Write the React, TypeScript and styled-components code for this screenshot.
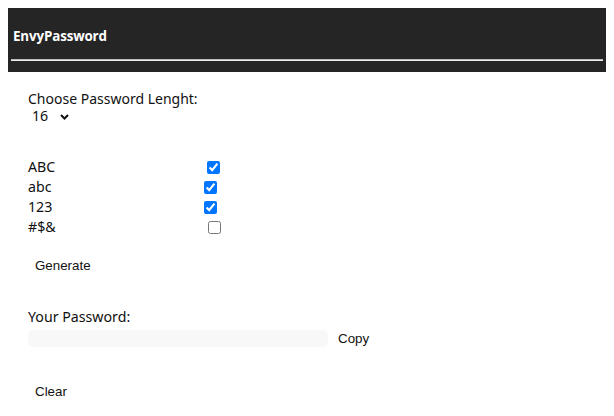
import React, { useState } from "react";
import styled, { createGlobalStyle } from "styled-components";

const Global = createGlobalStyle`
  body {
    margin: 8px;
    font-family: "Noto Sans", "Open Sans", sans-serif;
    font-size: 14px;
    color: #111;
    background: #fff;
  }
`;

const Header = styled.header`
  box-sizing: border-box;
  height: 64px;
  background: #252525;
  padding: 18px 3px 0 3px;
  display: flex;
  flex-direction: column;
`;

const Title = styled.h1`
  margin: 0 0 0 2px;
  font-family: "Open Sans", "Noto Sans", sans-serif;
  font-size: 13.4px;
  font-weight: 700;
  line-height: 20px;
  color: #fff;
  letter-spacing: -0.15px;
`;

const Rule = styled.hr`
  margin: 13px 0 0 0;
  height: 0;
  border: none;
  border-top: 1px solid #bcbcbc;
  border-bottom: 1px solid #ececec;
`;

const Main = styled.main`
  padding: 18px 0 0 20px;
  display: flex;
  flex-direction: column;
  align-items: flex-start;
`;

const Label = styled.label`
  display: block;
  line-height: 18px;
  font-size: 14px;
`;

const SelectWrap = styled.div`
  position: relative;
  height: 16px;
  display: flex;
  align-items: center;
`;

const Select = styled.select`
  appearance: none;
  -webkit-appearance: none;
  border: none;
  background: transparent;
  font-family: inherit;
  font-size: 14.2px;
  color: #111;
  line-height: 16px;
  height: 16px;
  padding: 0 0 0 4px;
  width: 44px;
  outline: none;
`;

const Chevron = styled.svg`
  position: absolute;
  left: 32px;
  top: 6px;
  pointer-events: none;
`;

const Options = styled.div`
  margin-top: 33px;
  display: flex;
  flex-direction: column;
`;

const OptionRow = styled.div`
  display: flex;
  align-items: center;
  height: 20px;
`;

const OptionText = styled.span`
  line-height: 20px;
  font-size: 14.2px;
`;

const Check = styled.input`
  margin: 0 0 0 152px;
  width: 13px;
  height: 13px;
`;

const Button = styled.button<{ $top?: number }>`
  margin-top: ${(p) => p.$top ?? 0}px;
  font-family: "Liberation Sans", Arial, sans-serif;
  font-size: 13.33px;
  color: #111;
  background: transparent;
  border: none;
  padding: 0 7px;
  height: 21px;
  line-height: 21px;
  cursor: pointer;
`;

const PasswordLabel = styled.div`
  margin-top: 31px;
  line-height: 20px;
  font-size: 14.2px;
`;

const OutputRow = styled.div`
  margin-top: 1px;
  display: flex;
  align-items: center;
  gap: 3px;
`;

const Output = styled.input`
  box-sizing: border-box;
  width: 300px;
  height: 17px;
  border: none;
  border-radius: 5px;
  background: #f8f8f8;
  font-family: inherit;
  font-size: 13px;
  padding: 0 6px;
  outline: none;
`;

const options = [
  { label: "ABC", checked: true },
  { label: "abc", checked: true },
  { label: "123", checked: true },
  { label: "#$&", checked: false },
];

export default function App() {
  const [length, setLength] = useState("16");
  const [checks, setChecks] = useState(options.map((o) => o.checked));
  const [password, setPassword] = useState("");

  return (
    <>
      <Global />
      <Header>
        <Title>EnvyPassword</Title>
        <Rule />
      </Header>
      <Main>
        <Label htmlFor="len">Choose Password Lenght:</Label>
        <SelectWrap>
          <Select id="len" value={length} onChange={(e) => setLength(e.target.value)}>
            {[8, 10, 12, 14, 16, 20, 24, 32].map((n) => (
              <option key={n} value={String(n)}>
                {n}
              </option>
            ))}
          </Select>
          <Chevron width="9" height="6" viewBox="0 0 9 6">
            <path d="M1 1 L4.5 4.5 L8 1" fill="none" stroke="#111" strokeWidth="2" />
          </Chevron>
        </SelectWrap>
        <Options>
          {options.map((o, i) => (
            <OptionRow key={o.label}>
              <OptionText>{o.label}</OptionText>
              <Check
                type="checkbox"
                checked={checks[i]}
                onChange={() => setChecks(checks.map((c, j) => (j === i ? !c : c)))}
              />
            </OptionRow>
          ))}
        </Options>
        <Button $top={18} onClick={() => setPassword("x".repeat(Number(length)))}>
          Generate
        </Button>
        <PasswordLabel>Your Password:</PasswordLabel>
        <OutputRow>
          <Output readOnly value={password} />
          <Button>Copy</Button>
        </OutputRow>
        <Button $top={32} onClick={() => setPassword("")}>
          Clear
        </Button>
      </Main>
    </>
  );
}
